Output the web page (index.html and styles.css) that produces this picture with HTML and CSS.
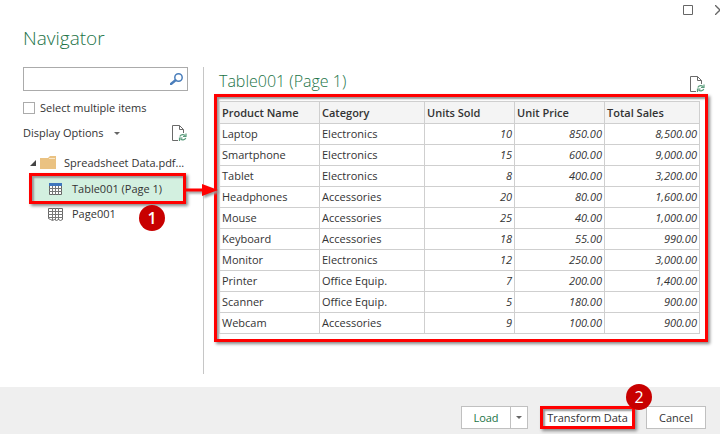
FILE: index.html
```html
<!DOCTYPE html>
<html lang="en">
<head>
    <meta charset="UTF-8">
    <meta name="viewport" content="width=device-width, initial-scale=1.0">
    <title>Navigator</title>
    <link rel="stylesheet" href="styles.css">
</head>
<body>
    <!-- Shared icon -->
    <svg class="defs" width="0" height="0" aria-hidden="true">
        <symbol id="icon-refresh" viewBox="0 0 15 17">
            <path d="M6 15.5H.5V.5h7l4 4V8M7.5.5v4h4" fill="none" stroke="#6a6a6a"/>
            <path d="M7.8 11.5c1-2.2 4-2.4 5.2-.8M14 8.5v3h-3M13.8 13c-1 2.2-4 2.4-5.2.8M7.5 16v-3h3" fill="none" stroke="#5a9c7c" stroke-width="1.2"/>
        </symbol>
    </svg>

    <div class="dialog">
        <div class="window-controls">
            <button class="icon-button" aria-label="Maximize">
                <svg width="10" height="10" viewBox="0 0 10 10"><path d="M.5.5h9v9h-9z" fill="none" stroke="#666"/></svg>
            </button>
            <button class="icon-button" aria-label="Close">
                <svg width="10" height="10" viewBox="0 0 10 10"><path d="M0 0l10 10M10 0L0 10" fill="none" stroke="#666" stroke-width="1.3"/></svg>
            </button>
        </div>
        <h1>Navigator</h1>

        <main class="content">
            <section class="sidebar">
                <div class="search">
                    <input type="text" aria-label="Search">
                    <svg class="search-icon" width="13" height="12" viewBox="0 0 13 12">
                        <circle cx="8.5" cy="4.5" r="3.7" fill="none" stroke="#4a7ebb" stroke-width="1.5"/>
                        <path d="M5.5 7.3L1 11" stroke="#4a7ebb" stroke-width="2.4" stroke-linecap="round"/>
                    </svg>
                </div>
                <label class="multiple"><input type="checkbox">Select multiple items</label>
                <div class="options">
                    <button class="text-button">Display Options <span class="caret"></span></button>
                    <button class="icon-button" aria-label="Refresh"><svg width="15" height="17"><use href="#icon-refresh"/></svg></button>
                </div>

                <div class="tree">
                    <button class="tree-item folder">
                        <svg width="6" height="6" viewBox="0 0 6 6"><path d="M6 0v6H0z" fill="#444"/></svg>
                        <svg width="16" height="13" viewBox="0 0 16 13"><path d="M0 2h8l2-2h6v13H0z" fill="#eac282"/><path d="M9 2.5h6" stroke="#f8e6c8"/></svg>
                        <span>Spreadsheet Data.pdf...</span>
                    </button>
                    <button class="tree-item selected">
                        <svg width="13" height="12" viewBox="0 0 13 12">
                            <path d="M.5.5h12v11H.5z" fill="#fff" stroke="#666"/>
                            <path d="M0 5.5h13M0 8.5h13M3.5 3v9M6.5 3v9M9.5 3v9" stroke="#777"/>
                            <path d="M0 0h13v3H0z" fill="#3f76bd"/>
                        </svg>
                        <span>Table001 (Page 1)</span>
                    </button>
                    <button class="tree-item page">
                        <svg width="15" height="13" viewBox="0 0 15 13">
                            <path d="M.5.5h14v11l-2 1-2-1-2 1-2-1-2 1-2-1-2-1z" fill="#fff" stroke="#666"/>
                            <path d="M0 3.5h15M0 6.5h15M0 9.5h15M4.5 0v12M7.5 0v12M10.5 0v12" stroke="#777"/>
                        </svg>
                        <span>Page001</span>
                    </button>
                    <span class="badge badge-one">1</span>
                    <svg class="arrow" width="32" height="12" viewBox="0 0 32 12">
                        <path d="M0 6h18" stroke="#f00" stroke-width="3"/>
                        <path d="M16 0l16 6-16 6z" fill="#f00"/>
                    </svg>
                </div>
            </section>

            <section class="preview">
                <div class="preview-header">
                    <h2>Table001 (Page 1)</h2>
                    <button class="icon-button" aria-label="Refresh preview"><svg width="15" height="17"><use href="#icon-refresh"/></svg></button>
                </div>
                <div class="table-frame">
                    <table>
                        <colgroup>
                            <col class="col-name">
                            <col class="col-category">
                            <col class="col-number">
                            <col class="col-number">
                            <col>
                        </colgroup>
                        <thead>
                            <tr><th>Product Name</th><th>Category</th><th>Units Sold</th><th>Unit Price</th><th>Total Sales</th></tr>
                        </thead>
                        <tbody>
                            <tr><td>Laptop</td><td>Electronics</td><td>10</td><td>850.00</td><td>8,500.00</td></tr>
                            <tr><td>Smartphone</td><td>Electronics</td><td>15</td><td>600.00</td><td>9,000.00</td></tr>
                            <tr><td>Tablet</td><td>Electronics</td><td>8</td><td>400.00</td><td>3,200.00</td></tr>
                            <tr><td>Headphones</td><td>Accessories</td><td>20</td><td>80.00</td><td>1,600.00</td></tr>
                            <tr><td>Mouse</td><td>Accessories</td><td>25</td><td>40.00</td><td>1,000.00</td></tr>
                            <tr><td>Keyboard</td><td>Accessories</td><td>18</td><td>55.00</td><td>990.00</td></tr>
                            <tr><td>Monitor</td><td>Electronics</td><td>12</td><td>250.00</td><td>3,000.00</td></tr>
                            <tr><td>Printer</td><td>Office Equip.</td><td>7</td><td>200.00</td><td>1,400.00</td></tr>
                            <tr><td>Scanner</td><td>Office Equip.</td><td>5</td><td>180.00</td><td>900.00</td></tr>
                            <tr><td>Webcam</td><td>Accessories</td><td>9</td><td>100.00</td><td>900.00</td></tr>
                        </tbody>
                    </table>
                </div>
            </section>
        </main>

        <footer>
            <div class="split-button">
                <button class="load">Load</button>
                <button class="load-menu" aria-label="Load options"><span class="caret"></span></button>
            </div>
            <div class="transform-wrap">
                <button class="transform">Transform Data</button>
                <span class="badge badge-two">2</span>
            </div>
            <button class="cancel">Cancel</button>
        </footer>
    </div>
</body>
</html>
```
FILE: styles.css
```css
* { box-sizing: border-box; }
body { margin: 0; background-color: #fff; color: #333; font-family: "Open Sans", "Noto Sans", sans-serif; font-size: 11px; line-height: 16px; }
button { font: inherit; color: inherit; background: none; border: none; padding: 0; cursor: pointer; white-space: nowrap; }
svg { display: block; flex: none; }
.defs { position: absolute; }
.dialog { display: flex; flex-direction: column; min-height: 100vh; overflow: hidden; }

.window-controls { display: flex; justify-content: flex-end; gap: 22px; height: 20px; padding-top: 5px; margin-right: -5px; }
.icon-button { display: flex; align-items: flex-start; }
h1, h2 { margin: 0; font-weight: 300; color: #217346; }
h1 { padding: 4px 23px 0; font-size: 19px; line-height: 28px; }

.content { display: grid; grid-template-columns: 181px 1fr; flex: 1; padding: 15px 12px 13px 23px; }
.sidebar { border-right: 1px solid #c6c6c6; padding-right: 15px; }
.search { position: relative; }
.search input { display: block; width: 100%; height: 24px; padding: 2px 24px 2px 6px; border: 1px solid #ababab; font: inherit; }
.search-icon { position: absolute; right: 5px; top: 6px; }
.multiple { display: flex; align-items: center; gap: 5px; height: 16px; margin-top: 9px; white-space: nowrap; }
.multiple input { appearance: none; width: 12px; height: 12px; margin: 0; border: 1px solid #ababab; background-color: #fff; }
.options { display: flex; justify-content: space-between; align-items: center; height: 18px; margin-top: 8px; padding-right: 1px; }
.text-button { display: flex; align-items: center; gap: 10px; }
.caret { display: block; border: 3px solid transparent; border-top-color: #666; border-bottom: none; }

.tree { position: relative; margin-top: 10px; }
.tree-item { display: flex; align-items: center; height: 21px; }
.folder { gap: 4px; padding-left: 7px; }
.folder span { margin-left: 4px; }
.selected { width: 157px; height: 31px; margin-left: 6px; padding-left: 17px; gap: 10px; background-color: #d3f0e0; border: 3px solid #f00; box-shadow: 2px 2px 3px #888, inset 2px 2px 2px #999; }
.page { height: 20px; padding-left: 25px; gap: 9px; }
.badge { position: absolute; width: 26px; height: 26px; border-radius: 50%; background-color: #c80000; color: #fff; font-size: 16px; line-height: 26px; text-align: center; }
.badge-one { left: 116px; top: 53px; font-weight: 600; }
.badge-two { right: -17px; top: -22px; }
.arrow { position: absolute; left: 163px; top: 32px; filter: drop-shadow(2px 2px 1px #999); z-index: 1; }

.preview { min-width: 0; padding-left: 10px; }
.preview-header { display: flex; justify-content: space-between; padding: 0 3px 0 5px; height: 27px; }
.preview-header .icon-button { padding-top: 9px; }
h2 { font-size: 16px; line-height: 28px; }
.table-frame { padding: 4px 5px 5px 2px; border: 3px solid #f00; box-shadow: 2px 2px 3px #888, inset 2px 2px 2px #999; }
table { width: 100%; border-collapse: collapse; table-layout: fixed; }
.col-name { width: 100px; }
.col-category { width: 105px; }
.col-number { width: 90px; }
th, td { height: 21px; padding: 0 2px; border: 1px solid #cfcfcf; white-space: nowrap; text-align: left; }
th { height: 22px; background-color: #f4f4f4; font-weight: 600; }
td:nth-child(n+3) { text-align: right; font-style: italic; }

footer { display: flex; justify-content: flex-end; align-items: flex-start; padding: 19px 14px 5px; background-color: #efefef; }
footer button { height: 23px; background-color: #fff; border: 1px solid #c0c0c0; }
.split-button { display: flex; margin-right: 12px; }
.load { width: 50px; color: #217346; }
footer .load-menu { display: flex; align-items: center; justify-content: center; width: 17px; border-left: none; }
.transform-wrap { position: relative; margin-right: 11px; }
footer .transform { width: 95px; border: 3px solid #f00; box-shadow: 2px 2px 3px #888, inset 2px 2px 2px #999; }
.cancel { width: 60px; }
```
